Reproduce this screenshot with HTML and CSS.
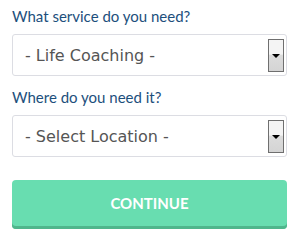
FILE: index.html
```html
<!DOCTYPE html>
<html>
<head>
<meta charset="utf-8">
<link rel="stylesheet" href="styles.css">
</head>
<body>
<form class="form">
  <label class="label">What service do you need?</label>
  <div class="select-wrap">
    <select class="select"><option>- Life Coaching -</option></select>
    <span class="arrow"><span class="tri"></span></span>
  </div>
  <label class="label label-2">Where do you need it?</label>
  <div class="select-wrap">
    <select class="select"><option>- Select Location -</option></select>
    <span class="arrow"><span class="tri"></span></span>
  </div>
  <button type="button" class="btn">CONTINUE</button>
</form>
</body>
</html>
```
FILE: styles.css
```css
html, body { margin: 0; padding: 0; background: #fff; }
.form {
  display: flex;
  flex-direction: column;
  padding: 6px 13px 0 12px;
}
.label {
  font-family: Lato, "Liberation Sans", sans-serif;
  font-size: 15px;
  color: #1d4f7c;
  line-height: 20px;
  margin-bottom: 8px;
}
.label-2 { margin-top: 11px; }
.select-wrap { position: relative; }
.select {
  appearance: none;
  -webkit-appearance: none;
  width: 100%;
  height: 42px;
  box-sizing: border-box;
  border: 1px solid #dcdde3;
  border-radius: 3px;
  background: #fff;
  font-family: "DejaVu Sans", Verdana, sans-serif;
  font-size: 16px;
  color: #555;
  padding: 0 0 0 12px;
  margin: 0;
}
.arrow {
  position: absolute;
  right: 3px;
  top: 5px;
  width: 14px;
  height: 31px;
  border: 1px solid #6f6f6f;
  background: linear-gradient(#f4f4f4 0%, #f4f4f4 45%, #dcdcdc 50%, #d4d4d4 100%);
  display: flex;
  align-items: center;
  justify-content: center;
}
.tri {
  width: 0; height: 0;
  border-left: 4px solid transparent;
  border-right: 4px solid transparent;
  border-top: 4px solid #000;
}
.btn {
  margin-top: 23px;
  height: 49px;
  border: 0;
  border-radius: 4px;
  background: #68ddb0;
  box-shadow: inset 0 -3px 0 #4fb68c;
  color: #fff;
  font-family: Lato, "Liberation Sans", sans-serif;
  font-weight: 700;
  font-size: 15px;
  padding: 0 0 3px 0;
}
```
